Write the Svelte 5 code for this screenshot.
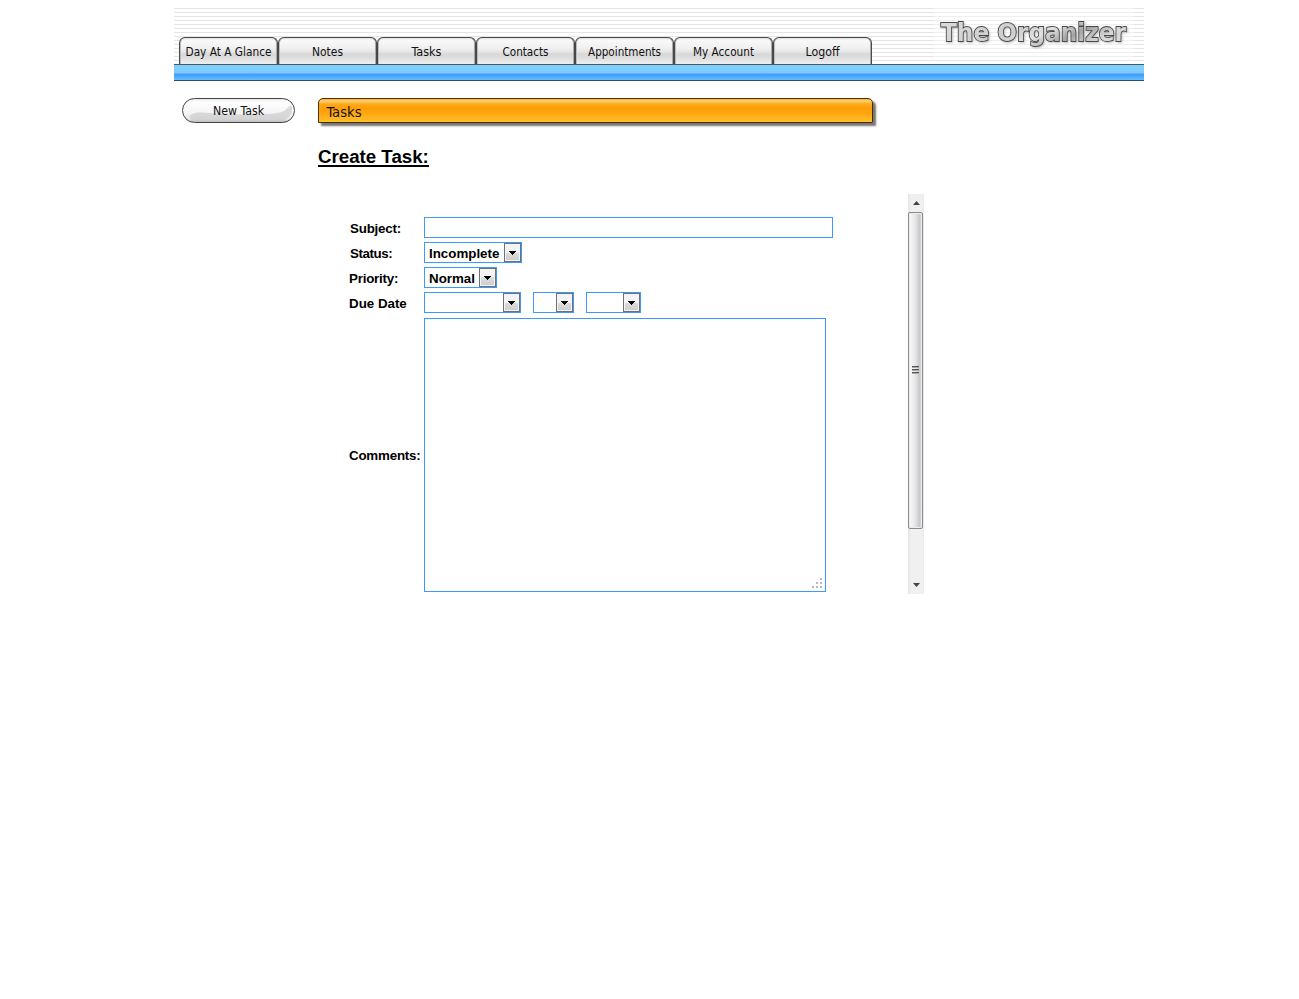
<script>
  const tabs = [
    ['Day At A Glance', 86], ['Notes', 31], ['Tasks', 30], ['Contacts', 46],
    ['Appointments', 73], ['My Account', 61], ['Logoff', 34]
  ];
</script>

{#snippet arrow()}
  <span class="drop"><svg width="7" height="4" shape-rendering="crispEdges"><path d="M0 0h7v1H0zM1 1h5v1H1zM2 2h3v1H2zM3 3h1v1H3z" /></svg></span>
{/snippet}

{#snippet select(label, width)}
  <span class="select" style="width:{width}px"><span class="value">{label}</span>{@render arrow()}</span>
{/snippet}

<div class="page">
  <header>
    <nav>
      {#each tabs as [name, width]}
        <a class="tab" href="#top" aria-label={name}>
          <svg width="97" height="26"><text x="48.5" y="18" text-anchor="middle" textLength={width} lengthAdjust="spacingAndGlyphs">{name}</text></svg>
        </a>
      {/each}
    </nav>
    <svg class="logo" width="210" height="50" viewBox="0 0 210 50">
      <defs>
        <linearGradient id="metal" x2="1" y2=".3">
          <stop stop-color="#dcdcdc" /><stop offset=".5" stop-color="#cdcdcd" /><stop offset=".65" stop-color="#e2e2e2" /><stop offset=".82" stop-color="#a4a4a4" /><stop offset="1" stop-color="#dadada" />
        </linearGradient>
      </defs>
      <rect width="200" height="50" fill="#fff" opacity=".4" />
      <text class="brand" x="7" y="32.5" textLength="185" lengthAdjust="spacingAndGlyphs">The Organizer</text>
    </svg>
  </header>
  <div class="bar"></div>

  <div class="body">
    <aside>
      <button class="new">
        <svg width="111" height="23">
          <path d="M6 18C10 13 16 13 25 14C55 16 92 17 101 12C105 9 106 7 108 6C111 12 108 19 99 22H11Q8 21 6 18Z" fill="#c9c9c9" opacity=".65" />
          <text x="55.5" y="16" text-anchor="middle" textLength="51" lengthAdjust="spacingAndGlyphs">New Task</text>
        </svg>
      </button>
    </aside>
    <main>
      <div class="title"><svg width="100" height="23"><text x="7.5" y="18" textLength="35" lengthAdjust="spacingAndGlyphs">Tasks</text></svg></div>
      <h1><span>Create Task:</span></h1>
      <div class="scroll">
        <form>
          <div class="row"><span class="label in">Subject:</span><span class="input"></span></div>
          <div class="row"><span class="label in tight">Status:</span>{@render select('Incomplete', 98)}</div>
          <div class="row"><span class="label">Priority:</span>{@render select('Normal', 73)}</div>
          <div class="row"><span class="label due">Due Date</span><span class="dates">{@render select('', 97)}{@render select('', 41)}{@render select('', 55)}</span></div>
          <div class="row comments">
            <span class="label">Comments:</span>
            <div class="area">
              <svg width="10" height="10" fill="#b8b8b8" shape-rendering="crispEdges"><path d="M8 0h2v2h-2zM4 4h2v2h-2zM8 4h2v2h-2zM0 8h2v2h-2zM4 8h2v2h-2zM8 8h2v2h-2z" /></svg>
            </div>
          </div>
        </form>
        <div class="track">
          <span class="end"><svg width="7" height="4"><path d="M3.5 0L7 4H0z" /></svg></span>
          <span class="thumb"><i></i><i></i><i></i></span>
          <span class="end last"><svg width="7" height="4"><path d="M0 0H7L3.5 4z" /></svg></span>
        </div>
      </div>
    </main>
  </div>
</div>

<style>
  :global(body) { background: #fff; }
  .page { width: 970px; margin: 0 0 0 174px; padding-top: 8px; font-family: "Liberation Sans", sans-serif; color: #000; }
  svg { display: block; }
  header { height: 56px; display: flex; justify-content: space-between; background: repeating-linear-gradient(#e5e5e5 0 1px, #fff 1px 4px); }
  nav { display: flex; padding: 29px 0 0 5px; }
  .tab { box-sizing: border-box; width: 99px; height: 27px; border: solid #484848; border-width: 1px 1px 0; border-radius: 6px 6px 0 0; background: linear-gradient(#dedede 0, #f9f9f9 2px, #f0f0f0 10px, #e5e5e5 14px, #d8d8d8 16px, #dedede 20px, #efefef 26px); box-shadow: inset 1px 0 #bbb, inset -1px 0 #aaa; }
  .tab text, .new text, .title text { font-family: "DejaVu Sans Condensed", "DejaVu Sans", sans-serif; font-size: 12px; fill: #111; }
  .logo { overflow: visible; }
  .logo text { font: bold 25px "DejaVu Sans", "Noto Sans", sans-serif; }
  .brand { fill: url(#metal); stroke: #484848; stroke-width: 1.8; paint-order: stroke; filter: drop-shadow(1px 1px 1px #bbb); }
  .bar { box-sizing: border-box; height: 17px; border-top: 1px solid #555; border-bottom: 1px solid #28536c; background: linear-gradient(#73d5ff 0, #83cdff 4px, #7fc9ff 8px, #3d9bff 9px, #4aa6ff 11px, #62c1ff 15px); }
  .body { display: flex; padding-top: 17px; }
  aside { width: 136px; padding-left: 8px; }
  .new { display: block; box-sizing: border-box; width: 113px; height: 25px; padding: 0; border: 1px solid #444; border-radius: 13px; overflow: hidden; background: linear-gradient(#e8e8e8, #fff 3px, #f5f5f5 13px, #e9e9e9 20px, #bbb); }
  .title { box-sizing: border-box; width: 555px; height: 25px; border: 1px solid #4a3000; border-radius: 5px 5px 0 0; background: linear-gradient(#ffad24 0, #ffd078 2px, #ffaa1c 5px, #ff9e06 9px, #ffa812 15px, #ffc12c 23px); box-shadow: 3px 3px 2px #777; }
  .title text { font-size: 14px; }
  h1 { margin: 23px 0 0; font-size: 18.7px; line-height: 21px; height: 21px; }
  h1 span { display: inline-block; width: 111px; height: 19px; border-bottom: 2px solid #000; white-space: nowrap; }
  .scroll { margin-top: 27px; width: 606px; height: 400px; display: flex; justify-content: space-between; }
  form { padding: 23px 0 0 31px; font-size: 13.33px; font-weight: bold; }
  .row { height: 21px; margin-bottom: 4px; display: flex; align-items: center; }
  .label { width: 75px; box-sizing: border-box; padding-top: 2px; white-space: nowrap; letter-spacing: -.2px; }
  .in { padding-left: 1px; }
  .tight { letter-spacing: -.4px; }
  .due { letter-spacing: 0; }
  .input { box-sizing: border-box; width: 409px; height: 21px; border: 1px solid #3c9aff; }
  .select { box-sizing: border-box; height: 21px; border: 1px solid #3c9aff; display: flex; justify-content: space-between; align-items: center; padding-left: 4px; }
  .value { padding-top: 1px; }
  .drop { box-sizing: border-box; width: 17px; height: 19px; border: 1px solid #707070; background: linear-gradient(#f3f3f3 0 50%, #dedede 50%, #ccc); display: flex; align-items: center; justify-content: center; box-shadow: inset 0 0 0 1px #f5f5f5; }
  .dates { display: flex; gap: 12px; }
  .comments { height: 274px; margin-top: 5px; }
  .comments .label { padding-top: 0; }
  .area { box-sizing: border-box; width: 402px; height: 274px; border: 1px solid #3c9aff; display: flex; align-items: flex-end; justify-content: flex-end; padding: 3px; }
  .track { box-sizing: border-box; width: 16px; height: 400px; background: linear-gradient(90deg, #e4e4e4, #f0f0f0 3px, #f0f0f0 15px, #e6e6e6); display: flex; flex-direction: column; }
  .end { height: 18px; display: flex; align-items: center; justify-content: center; fill: #444; }
  .last { margin-top: auto; }
  .thumb { box-sizing: border-box; width: 15px; height: 317px; border: 1px solid #8b8b8b; border-radius: 2px; background: linear-gradient(90deg, #fafafa, #e8e8ea 45%, #c9cacd 80%, #dadada); box-shadow: inset 0 0 0 1px #ededed; display: flex; flex-direction: column; align-items: center; justify-content: center; gap: 1px; padding: 0 1px 2px 0; }
  .thumb i { width: 7px; height: 2px; background: linear-gradient(#555 50%, #aaa 50%); }
</style>
